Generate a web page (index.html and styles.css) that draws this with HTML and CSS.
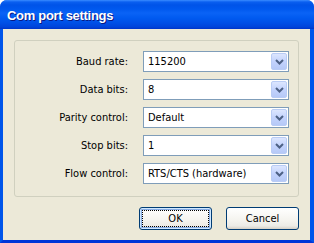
FILE: index.html
```html
<!DOCTYPE html>
<html>
<head>
<meta charset="utf-8">
<link rel="stylesheet" href="styles.css">
</head>
<body>
<div class="window">
  <div class="titlebar"><span class="title">Com port settings</span></div>
  <div class="frame">
    <div class="group">
      <div class="row">
        <label class="lbl">Baud rate:</label>
        <div class="combo"><span class="val">115200</span><span class="drop"><svg width="9" height="6" viewBox="0 0 9 6"><path d="M1 1 L4.5 4.5 L8 1" fill="none" stroke="#4D6185" stroke-width="2"/></svg></span></div>
      </div>
      <div class="row">
        <label class="lbl">Data bits:</label>
        <div class="combo"><span class="val">8</span><span class="drop"><svg width="9" height="6" viewBox="0 0 9 6"><path d="M1 1 L4.5 4.5 L8 1" fill="none" stroke="#4D6185" stroke-width="2"/></svg></span></div>
      </div>
      <div class="row">
        <label class="lbl">Parity control:</label>
        <div class="combo"><span class="val">Default</span><span class="drop"><svg width="9" height="6" viewBox="0 0 9 6"><path d="M1 1 L4.5 4.5 L8 1" fill="none" stroke="#4D6185" stroke-width="2"/></svg></span></div>
      </div>
      <div class="row">
        <label class="lbl">Stop bits:</label>
        <div class="combo"><span class="val">1</span><span class="drop"><svg width="9" height="6" viewBox="0 0 9 6"><path d="M1 1 L4.5 4.5 L8 1" fill="none" stroke="#4D6185" stroke-width="2"/></svg></span></div>
      </div>
      <div class="row">
        <label class="lbl">Flow control:</label>
        <div class="combo"><span class="val">RTS/CTS (hardware)</span><span class="drop"><svg width="9" height="6" viewBox="0 0 9 6"><path d="M1 1 L4.5 4.5 L8 1" fill="none" stroke="#4D6185" stroke-width="2"/></svg></span></div>
      </div>
    </div>
    <div class="buttons">
      <button class="btn default"><span class="focus">OK</span></button>
      <button class="btn">Cancel</button>
    </div>
  </div>
</div>
</body>
</html>
```
FILE: styles.css
```css
* { box-sizing: border-box; }
html, body { margin: 0; padding: 0; background: #ffffff; }
body { width: 314px; height: 243px; overflow: hidden; }

.window {
  width: 314px;
  height: 243px;
  display: flex;
  flex-direction: column;
  border-radius: 7px 7px 0 0;
  overflow: hidden;
  background: #0054E3;
  font-family: "DejaVu Sans Condensed", "DejaVu Sans", sans-serif;
  font-size: 11px;
  color: #000;
}

.titlebar {
  height: 29px;
  flex: none;
  display: flex;
  align-items: center;
  padding-left: 7px;
  padding-top: 1px;
  background: linear-gradient(to bottom,
    #3A8CFF 0px, #0A5FF0 2px, #0053E8 5px, #0058EE 9px,
    #0A63F6 13px, #005AF0 18px, #004FE6 23px, #0044DA 27px, #0034C8 29px);
}
.title {
  color: #fff;
  font-family: "Liberation Sans", sans-serif;
  font-weight: bold;
  font-size: 13px;
  letter-spacing: -0.3px;
  text-shadow: 1px 1px 0 #0A1882;
}

.frame {
  flex: 1;
  background: #ECE9D8;
  border-left: 3px solid #0055EA;
  border-right: 4px solid #0055EA;
  border-bottom: 3px solid #0035D8;
  display: flex;
  flex-direction: column;
  padding: 11px 11px 0 11px;
}

.group {
  height: 157px;
  border: 1px solid #D0D0BF;
  border-radius: 3px;
  padding: 10px 8px 0 0;
  display: flex;
  flex-direction: column;
  gap: 7px;
}

.row {
  display: flex;
  align-items: center;
  height: 21px;
}
.lbl {
  width: 113px;
  text-align: right;
}
.combo {
  margin-left: 15px;
  width: 146px;
  height: 21px;
  border: 1px solid #7F9DB9;
  background: #fff;
  display: flex;
  align-items: center;
  padding: 1px;
}
.val {
  flex: 1;
  padding-left: 3px;
}
.drop {
  width: 16px;
  height: 17px;
  border: 1px solid #B9CCF5;
  border-radius: 2px;
  background: linear-gradient(to bottom, #DCE6FE 0%, #C3D3FD 50%, #B6C9F7 100%);
  display: flex;
  align-items: center;
  justify-content: center;
}
.drop svg { display: block; }

.buttons {
  display: flex;
  justify-content: flex-end;
  gap: 14px;
  margin-top: 10px;
}
.btn {
  width: 73px;
  height: 23px;
  border: 1px solid #003C74;
  border-radius: 3px;
  background: linear-gradient(to bottom, #FFFFFF 0%, #F4F3EE 60%, #ECEBE6 85%, #D6D0C5 100%);
  font-family: "DejaVu Sans Condensed", "DejaVu Sans", sans-serif;
  font-size: 11px;
  color: #000;
  padding: 0;
  display: flex;
  align-items: center;
  justify-content: center;
}
.btn.default {
  box-shadow: inset 0 0 0 1px #CEE7FF, inset 0 0 0 2px #89ADE4;
  padding: 2px;
}
.focus {
  flex: 1;
  align-self: stretch;
  display: flex;
  align-items: center;
  justify-content: center;
  outline: 1px dotted #000;
  outline-offset: -1px;
}
```
